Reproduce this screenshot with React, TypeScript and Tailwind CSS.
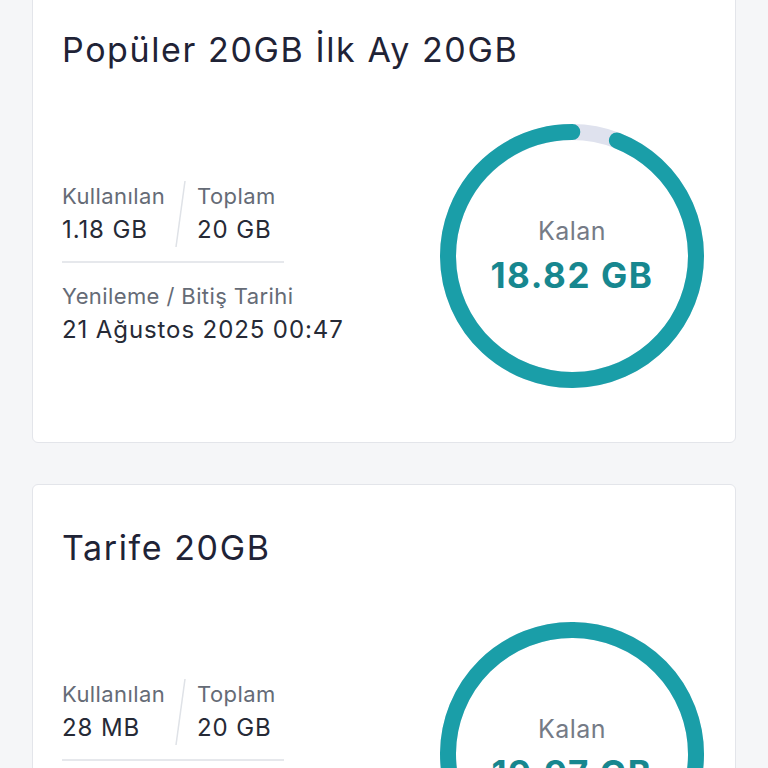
import React from "react";

type Pkg = {
  title: string;
  used: string;
  total: string;
  remain: string;
  usedFrac: number;
  date: string;
};

const pkgs: Pkg[] = [
  { title: "Popüler 20GB İlk Ay 20GB", used: "1.18 GB", total: "20 GB", remain: "18.82 GB", usedFrac: 1.18 / 20, date: "21 Ağustos 2025 00:47" },
  { title: "Tarife 20GB", used: "28 MB", total: "20 GB", remain: "19.97 GB", usedFrac: 0.028 / 20, date: "21 Ağustos 2025 00:47" },
];

function Ring({ frac, remain }: { frac: number; remain: string }) {
  const r = 124;
  const C = 2 * Math.PI * r;
  const rem = 1 - frac;
  return (
    <div className="relative w-[264px] h-[264px] shrink-0">
      <svg width="264" height="264" viewBox="0 0 264 264">
        <circle cx="132" cy="132" r={r} fill="none" stroke="#dfe2ee" strokeWidth="16" />
        <circle
          cx="132"
          cy="132"
          r={r}
          fill="none"
          stroke="#1a9ea8"
          strokeWidth="16"
          strokeLinecap="round"
          strokeDasharray={`${rem * C} ${C}`}
          transform={`rotate(${-90 + frac * 360} 132 132)`}
        />
      </svg>
      <div className="absolute inset-0 flex flex-col items-center justify-center">
        <div className="text-[25px] leading-[32px] text-[#757b86] tracking-[0.5px]">Kalan</div>
        <div className="text-[35px] leading-[44px] font-bold text-[#17878f] mt-[6px] tracking-[1.6px]">{remain}</div>
      </div>
    </div>
  );
}

function Card({ p, first }: { p: Pkg; first?: boolean }) {
  return (
    <div className={`bg-white border border-[#e3e5ea] rounded-[6px] pl-[29px] pr-[31px] pt-[41px] pb-[54px] ${first ? "-mt-[14px]" : ""}`}>
      <div className="text-[34px] leading-[44px] text-[#1f2336] tracking-[1.6px] whitespace-nowrap">{p.title}</div>
      <div className="flex items-center justify-between mt-[52px]">
        <div className="w-[222px] flex flex-col mt-[16px]">
          <div className="flex items-stretch">
            <div className="flex flex-col">
              <div className="text-[22px] leading-[30px] text-[#656b76] tracking-[0.4px]">Kullanılan</div>
              <div className="text-[24px] leading-[34px] text-[#262a36] tracking-[0.9px] mt-[2px]">{p.used}</div>
            </div>
            <div className="w-[32px] relative">
              <svg className="absolute inset-0" width="32" height="66" viewBox="0 0 32 66">
                <line x1="20" y1="0" x2="11" y2="66" stroke="#dfe2e7" strokeWidth="1.5" />
              </svg>
            </div>
            <div className="flex flex-col">
              <div className="text-[22px] leading-[30px] text-[#656b76] tracking-[0.4px]">Toplam</div>
              <div className="text-[24px] leading-[34px] text-[#262a36] tracking-[0.9px] mt-[2px]">{p.total}</div>
            </div>
          </div>
          <div className="h-[2px] bg-[#e6e8ec] mt-[14px]" />
          <div className="text-[22px] leading-[30px] text-[#656b76] tracking-[0.4px] mt-[18px] whitespace-nowrap">Yenileme / Bitiş Tarihi</div>
          <div className="text-[24px] leading-[34px] text-[#262a36] tracking-[0.9px] mt-[2px] whitespace-nowrap">{p.date}</div>
        </div>
        <Ring frac={p.usedFrac} remain={p.remain} />
      </div>
    </div>
  );
}

export default function App() {
  return (
    <div className="min-h-[768px] h-[768px] overflow-hidden bg-[#f5f6f8] px-[32px]" style={{ fontFamily: "Inter, 'Noto Sans', sans-serif" }}>
      <div className="flex flex-col gap-[41px]">
        {pkgs.map((p, i) => (
          <Card key={i} p={p} first={i === 0} />
        ))}
      </div>
    </div>
  );
}
